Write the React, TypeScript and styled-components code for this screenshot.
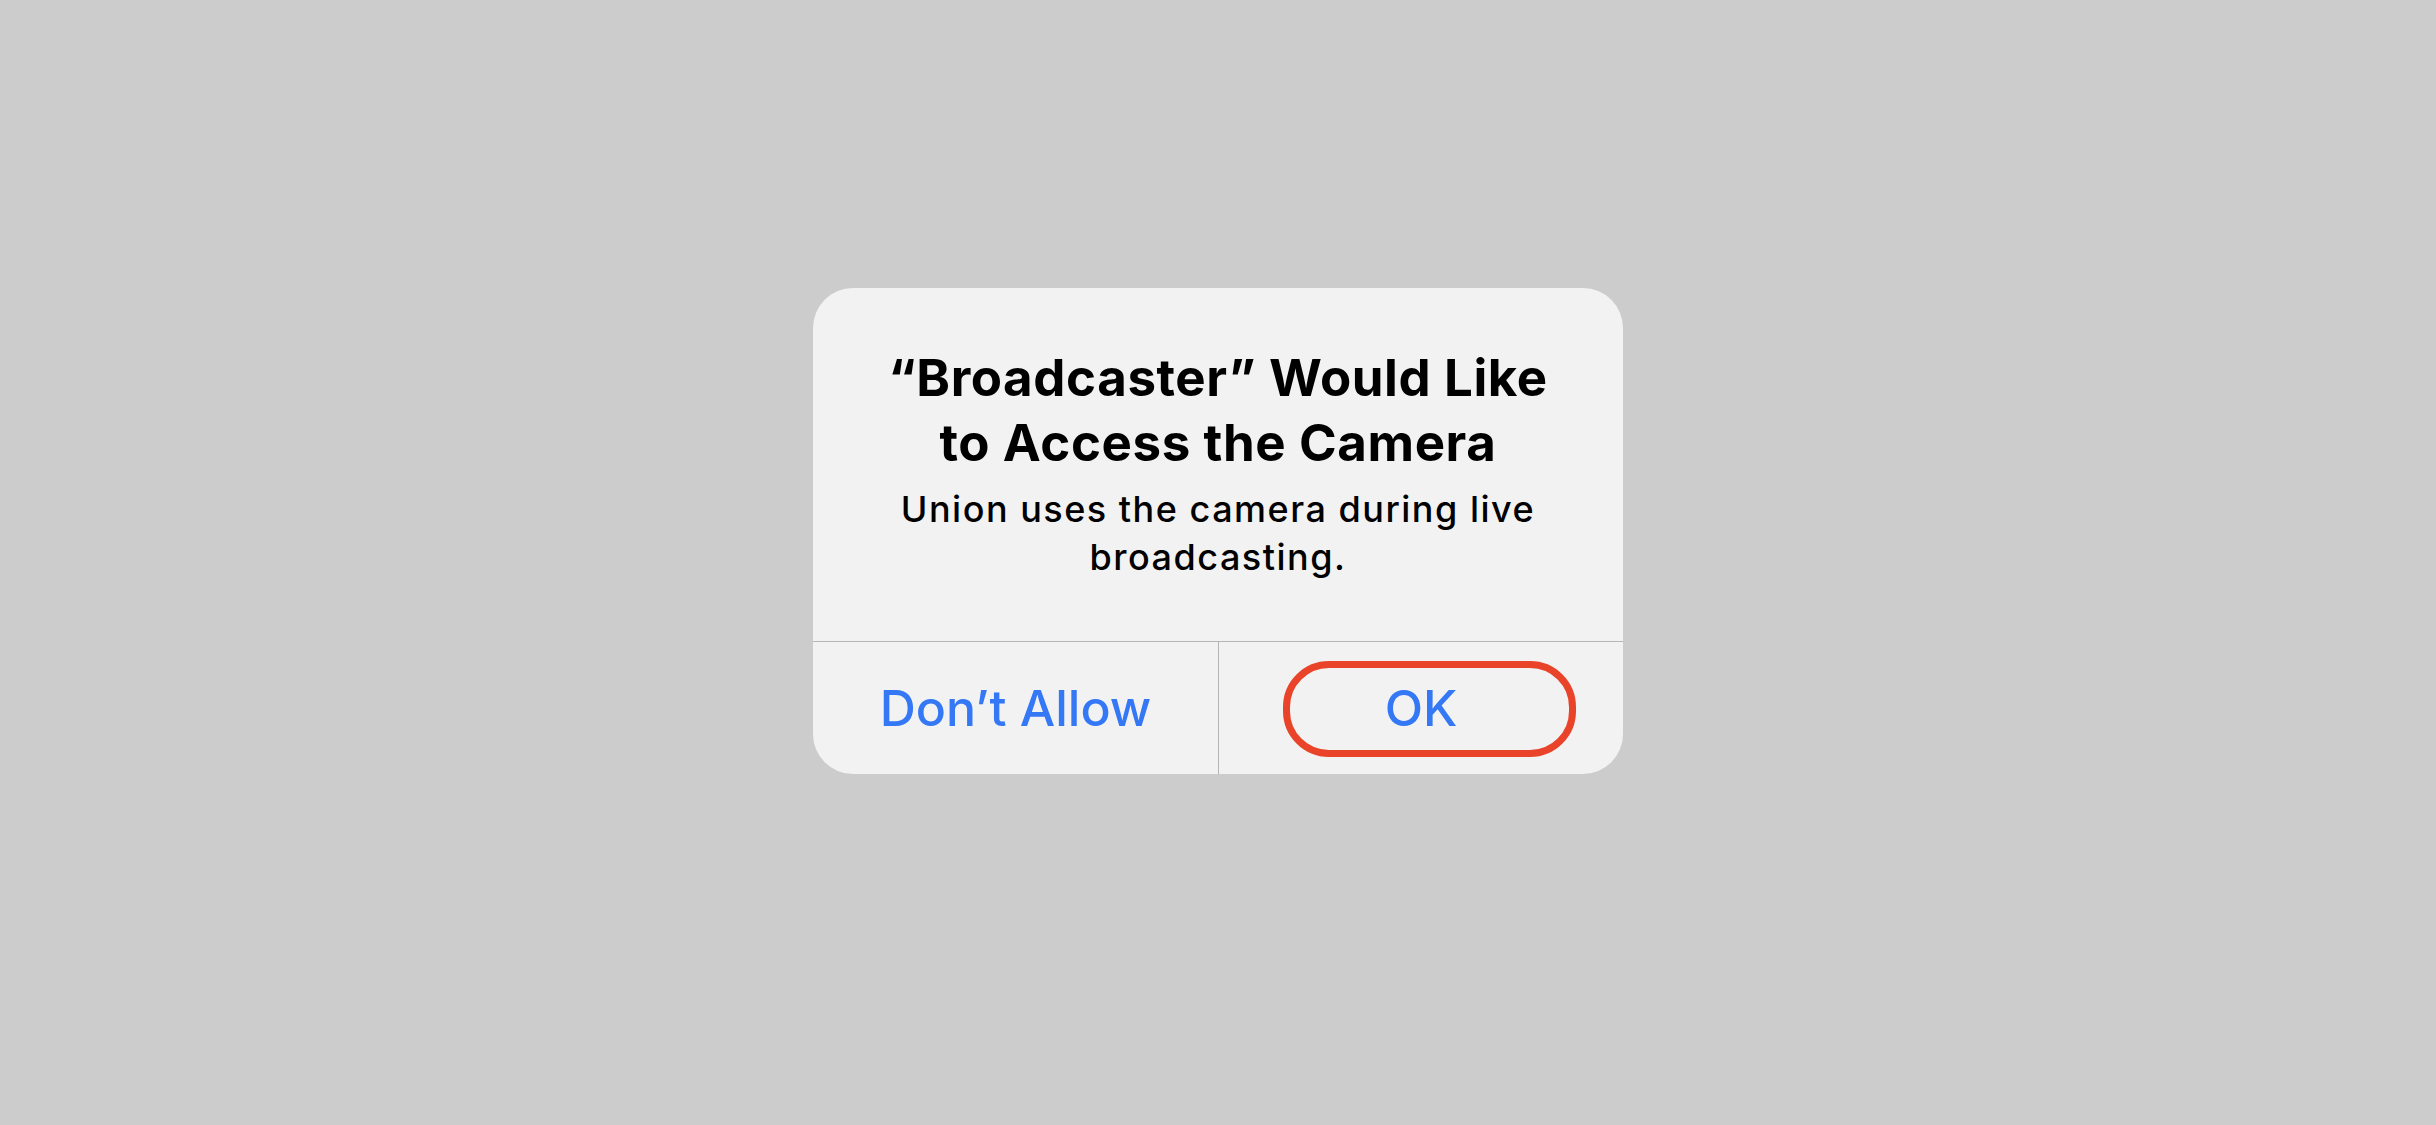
import styled, { createGlobalStyle } from 'styled-components';

const GlobalStyle = createGlobalStyle`
  html, body {
    margin: 0;
    padding: 0;
    background: #cccccc;
  }
  body {
    font-family: Inter, "Noto Sans", "Liberation Sans", sans-serif;
  }
`;

const Screen = styled.div`
  width: 2436px;
  height: 1125px;
  display: flex;
  justify-content: center;
  align-items: flex-start;
  padding-top: 288px;
  box-sizing: border-box;
`;

const Alert = styled.div`
  width: 810px;
  background: #f2f2f2;
  border-radius: 40px;
  overflow: hidden;
  display: flex;
  flex-direction: column;
`;

const Content = styled.div`
  padding: 57px 30px 60px;
  text-align: center;
  color: #000;
`;

const Title = styled.h1`
  margin: 0;
  font-size: 51px;
  line-height: 65px;
  font-weight: 700;
  letter-spacing: 0.6px;
`;

const Message = styled.p`
  margin: 10px 0 0;
  font-size: 36px;
  line-height: 48px;
  font-weight: 500;
  letter-spacing: 1.5px;
`;

const Actions = styled.div`
  display: grid;
  grid-template-columns: 1fr 1fr;
  border-top: 1px solid #b6b6b6;
  height: 132px;
`;

const Action = styled.button<{ $divider?: boolean }>`
  position: relative;
  border: none;
  background: transparent;
  padding: 0;
  margin: 0;
  font-family: inherit;
  font-size: 50px;
  font-weight: 500;
  color: #3478f6;
  display: flex;
  align-items: center;
  justify-content: center;
  border-left: ${(p) => (p.$divider ? '1px solid #b6b6b6' : 'none')};
  cursor: pointer;
`;

const Highlight = styled.span`
  position: absolute;
  left: 64px;
  top: 19px;
  width: 293px;
  height: 96px;
  box-sizing: border-box;
  border: 7px solid #e9432a;
  border-radius: 46px;
  pointer-events: none;
`;

export default function App() {
  return (
    <>
      <GlobalStyle />
      <Screen>
        <Alert>
          <Content>
            <Title>
              “Broadcaster” Would Like
              <br />
              to Access the Camera
            </Title>
            <Message>
              Union uses the camera during live
              <br />
              broadcasting.
            </Message>
          </Content>
          <Actions>
            <Action>Don’t Allow</Action>
            <Action $divider>
              OK
              <Highlight />
            </Action>
          </Actions>
        </Alert>
      </Screen>
    </>
  );
}
